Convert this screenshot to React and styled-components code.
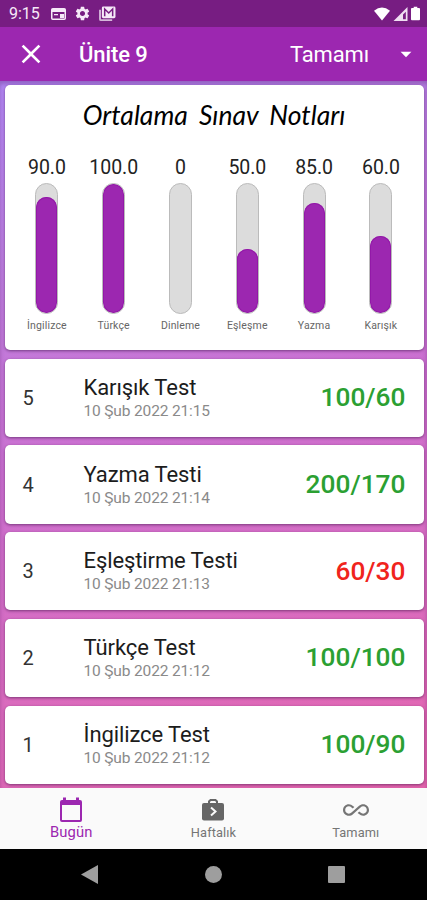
import React from 'react';
import styled, { createGlobalStyle } from 'styled-components';
import { MdSettings, MdClose, MdArrowDropDown, MdAllInclusive } from 'react-icons/md';

const PRIMARY = '#9c27b0';

const GlobalStyle = createGlobalStyle`
  * { box-sizing: border-box; }
  body {
    margin: 0;
    font-family: Roboto, "Noto Sans", sans-serif;
  }
`;

const Screen = styled.div`
  display: flex;
  flex-direction: column;
  width: 427px;
  height: 900px;
  overflow: hidden;
  background: #000;
`;

const StatusBar = styled.div`
  display: flex;
  flex: none;
  align-items: center;
  height: 27px;
  padding: 0 7px 0 9px;
  background: #771d82;
  color: #f6e9f8;
`;

const Clock = styled.span`
  width: 42px;
  font-size: 16px;
  line-height: 28px;
  white-space: nowrap;
`;

const StatusIcons = styled.div`
  display: flex;
  align-items: center;
  gap: ${({ $gap }) => $gap}px;
  margin-left: ${({ $end }) => ($end ? 'auto' : '0')};
`;

const AppBar = styled.header`
  display: flex;
  flex: none;
  align-items: center;
  height: 54px;
  padding: 0 8px 0 15px;
  background: ${PRIMARY};
  color: #fff;
`;

const BarTitle = styled.h1`
  flex: 1;
  margin: 0 0 0 32px;
  padding-top: 1px;
  font-size: 22px;
  font-weight: 500;
  letter-spacing: -0.1px;
  line-height: 54px;
`;

const Filter = styled.div`
  display: flex;
  align-items: center;
  font-size: 22px;
  letter-spacing: -0.15px;

  svg { margin-left: 24px; }
`;

const Content = styled.main`
  display: flex;
  flex: none;
  flex-direction: column;
  gap: 8.5px;
  height: 707px;
  padding: 4px 3.5px 0 4.5px;
  background: linear-gradient(165deg, #b388f5 0%, #bd7fe0 22%, #cb70d0 48%, #d86cc0 72%, #e565ad 100%);
  box-shadow: inset 0 3px 4px rgba(60, 10, 80, 0.3);
`;

const Card = styled.section`
  flex: none;
  border-radius: 5px;
  background: #fff;
  box-shadow: 0 1px 3px rgba(50, 10, 60, 0.55);
`;

const ChartCard = styled(Card)`
  height: 265.3px;
  padding: 11px 9px 0;
`;

const ChartTitle = styled.h2`
  height: 36px;
  margin: 0 0 22px;
  color: #000;
  font-family: Lato, sans-serif;
  font-size: 26.5px;
  font-style: italic;
  font-weight: 400;
  line-height: 38px;
  text-align: center;
  white-space: nowrap;
  word-spacing: 5px;
`;

const Bars = styled.div`
  display: grid;
  grid-template-columns: repeat(6, 66.8px);
`;

const BarColumn = styled.div`
  display: flex;
  flex-direction: column;
  align-items: center;
`;

const BarValue = styled.span`
  height: 29px;
  color: #222;
  font-size: 19.5px;
  letter-spacing: -0.05px;
  line-height: 28px;
`;

const Track = styled.div`
  display: flex;
  align-items: flex-end;
  width: 23px;
  height: 131px;
  overflow: hidden;
  border: 1px solid #bbb;
  border-radius: 12px;
  background: #dcdcdc;
`;

const Fill = styled.div`
  width: 100%;
  border-radius: 11px;
  background: ${PRIMARY};
  box-shadow: inset 0 0 0 1px #9318a8;
`;

const BarLabel = styled.span`
  margin-top: 5px;
  color: #666;
  font-size: 10.5px;
  letter-spacing: 0.15px;
  line-height: 14px;
`;

const TestCard = styled(Card)`
  display: flex;
  align-items: center;
  height: 78.2px;
  padding: 0 18px;
`;

const Order = styled.span`
  width: 61px;
  color: #333;
  font-size: 20px;
`;

const TestInfo = styled.div`
  flex: 1;
  padding-top: 1px;
`;

const TestName = styled.div`
  color: #1c1c1c;
  font-size: 22px;
  letter-spacing: -0.1px;
  line-height: 26px;
`;

const TestDate = styled.div`
  color: #8a8a8a;
  font-size: 15.5px;
  letter-spacing: -0.15px;
  line-height: 21px;
`;

const Score = styled.span`
  padding-bottom: 1px;
  color: ${({ $failed }) => ($failed ? '#f0241c' : '#2ba032')};
  font-size: 26.3px;
  font-weight: 500;
`;

const BottomNav = styled.nav`
  display: grid;
  flex: none;
  grid-template-columns: repeat(3, 1fr);
  height: 61px;
  background: #fafafa;
`;

const NavItem = styled.div`
  display: flex;
  flex-direction: column;
  align-items: center;
  padding-top: 9px;
  color: ${({ $active }) => ($active ? PRIMARY : '#757575')};
  font-size: ${({ $active }) => ($active ? '14.8px' : '12.8px')};
  letter-spacing: 0.1px;
  line-height: ${({ $active }) => ($active ? '16px' : '18px')};

  svg { flex: none; margin-bottom: 1px; }
`;

const SystemBar = styled.div`
  display: flex;
  flex: none;
  align-items: center;
  justify-content: space-between;
  height: 51px;
  padding: 0 82px 0 81px;
`;

const WindowIcon = () => (
  <svg width="15" height="12" viewBox="0 0 15 12">
    <rect x="0.75" y="0.75" width="13.5" height="10.5" rx="1" fill="none" stroke="#f6e9f8" strokeWidth="1.5" />
    <path d="M1 1h13v3H1zM9 6h4v4H9zM3 6h4v1.2H3z" fill="#f6e9f8" />
  </svg>
);

const MailIcon = () => (
  <svg width="17" height="15" viewBox="0 0 18 16">
    <path d="M1 4v10q0 1 1 1h12" fill="none" stroke="#d5b6da" strokeWidth="2" />
    <rect x="3" y="0.5" width="14.5" height="12.5" rx="1.5" fill="#f6e9f8" />
    <path d="M6 11V3.2l4.3 4.2 4.2-4.2V11" fill="none" stroke="#771d82" strokeWidth="1.6" />
  </svg>
);

const WifiIcon = () => (
  <svg width="16" height="14" viewBox="0 0 17 14">
    <path d="M0 3.6Q8.5-3.3 17 3.6L8.5 14z" fill="#fff" />
  </svg>
);

const SignalIcon = () => (
  <svg width="15" height="14" viewBox="0 0 15 15">
    <path d="M15 0v15H0z" fill="#f0dff2" />
    <path d="M13.2 5v8.2h-3V8z" fill="#771d82" />
  </svg>
);

const BatteryIcon = () => (
  <svg width="9" height="15" viewBox="0 0 10 15">
    <path d="M3 0h4v1.5h2q1 0 1 1V14q0 1-1 1H1q-1 0-1-1V2.5q0-1 1-1h2z" fill="#fff" />
  </svg>
);

const CalendarIcon = () => (
  <svg width="24" height="26" viewBox="0 0 24 26">
    <path
      d="M21 3h-1V0.5h-3V3H7V0.5H4V3H3Q1 3 1 5v18q0 2 2 2h18q2 0 2-2V5q0-2-2-2zm0 20H3V8h18z"
      fill={PRIMARY}
    />
  </svg>
);

const BagIcon = () => (
  <svg width="24" height="26" viewBox="0 0 24 26">
    <path d="M8 7V4.5L9.5 3h5L16 4.5V7" fill="none" stroke="#666" strokeWidth="2" />
    <rect x="1" y="6" width="22" height="17.5" rx="2" fill="#666" />
    <path d="M10 10.5l4.5 4-4.5 4" fill="none" stroke="#fafafa" strokeWidth="2" />
  </svg>
);

const scores = [
  { label: 'İngilizce', text: '90.0', value: 90 },
  { label: 'Türkçe', text: '100.0', value: 100 },
  { label: 'Dinleme', text: '0', value: 0 },
  { label: 'Eşleşme', text: '50.0', value: 50 },
  { label: 'Yazma', text: '85.0', value: 85 },
  { label: 'Karışık', text: '60.0', value: 60 },
];

const tests = [
  { order: 5, name: 'Karışık Test', date: '10 Şub 2022 21:15', score: '100/60' },
  { order: 4, name: 'Yazma Testi', date: '10 Şub 2022 21:14', score: '200/170' },
  { order: 3, name: 'Eşleştirme Testi', date: '10 Şub 2022 21:13', score: '60/30', failed: true },
  { order: 2, name: 'Türkçe Test', date: '10 Şub 2022 21:12', score: '100/100' },
  { order: 1, name: 'İngilizce Test', date: '10 Şub 2022 21:12', score: '100/90' },
];

const App = () => (
  <Screen>
    <GlobalStyle />
    <StatusBar>
      <Clock>9:15</Clock>
      <StatusIcons $gap={8}>
        <WindowIcon />
        <MdSettings size={17} />
        <MailIcon />
      </StatusIcons>
      <StatusIcons $gap={3} $end>
        <WifiIcon />
        <SignalIcon />
        <BatteryIcon />
      </StatusIcons>
    </StatusBar>
    <AppBar>
      <MdClose size={32} />
      <BarTitle>Ünite 9</BarTitle>
      <Filter>
        Tamamı
        <MdArrowDropDown size={26} />
      </Filter>
    </AppBar>
    <Content>
      <ChartCard>
        <ChartTitle>Ortalama Sınav Notları</ChartTitle>
        <Bars>
          {scores.map(({ label, text, value }) => (
            <BarColumn key={label}>
              <BarValue>{text}</BarValue>
              <Track>
                <Fill style={{ height: `${value}%` }} />
              </Track>
              <BarLabel>{label}</BarLabel>
            </BarColumn>
          ))}
        </Bars>
      </ChartCard>
      {tests.map(({ order, name, date, score, failed }) => (
        <TestCard key={order}>
          <Order>{order}</Order>
          <TestInfo>
            <TestName>{name}</TestName>
            <TestDate>{date}</TestDate>
          </TestInfo>
          <Score $failed={failed}>{score}</Score>
        </TestCard>
      ))}
    </Content>
    <BottomNav>
      <NavItem $active>
        <CalendarIcon />
        Bugün
      </NavItem>
      <NavItem>
        <BagIcon />
        Haftalık
      </NavItem>
      <NavItem>
        <MdAllInclusive size={26} />
        Tamamı
      </NavItem>
    </BottomNav>
    <SystemBar>
      <svg width="17" height="19" viewBox="0 0 17 19">
        <path d="M17 0v19L0 9.5z" fill="#9e9e9e" />
      </svg>
      <svg width="17" height="17" viewBox="0 0 17 17">
        <circle cx="8.5" cy="8.5" r="8.5" fill="#9e9e9e" />
      </svg>
      <svg width="17" height="17" viewBox="0 0 17 17">
        <rect width="17" height="17" rx="1" fill="#9e9e9e" />
      </svg>
    </SystemBar>
  </Screen>
);

export default App;
